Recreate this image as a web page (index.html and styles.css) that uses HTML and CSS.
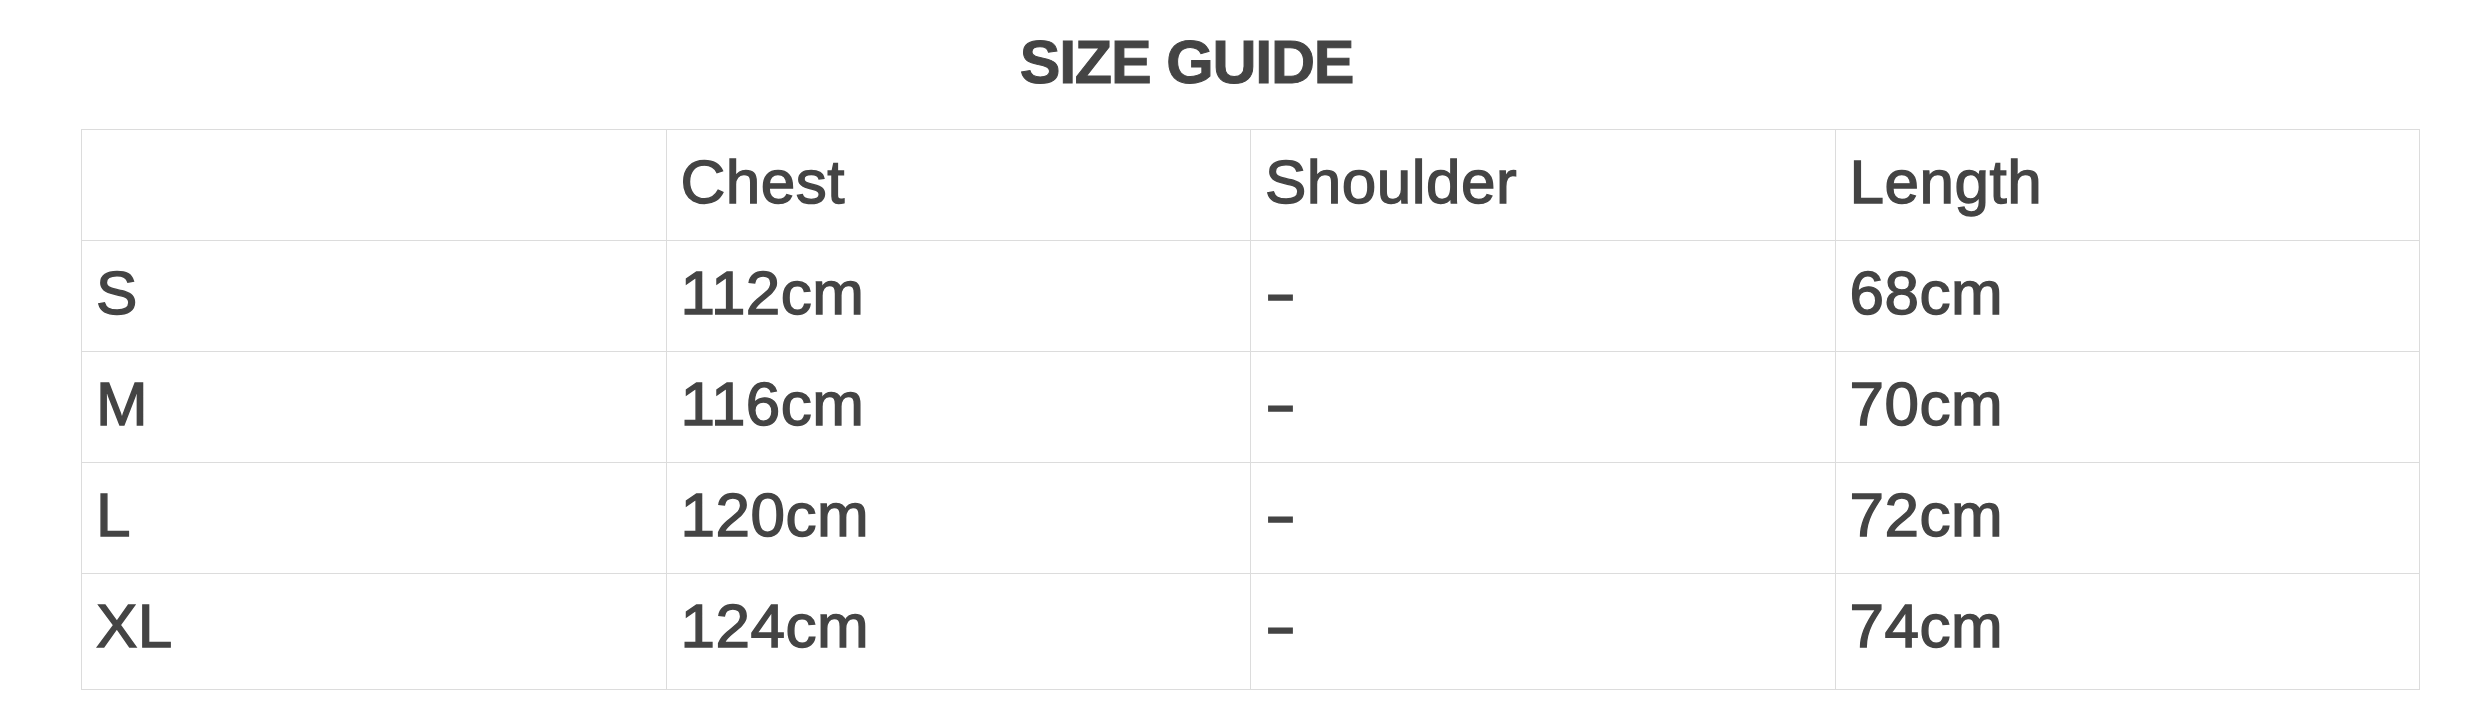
FILE: index.html
```html
<!DOCTYPE html>
<html lang="en">
<head>
<meta charset="utf-8">
<title>Size Guide</title>
<link rel="stylesheet" href="styles.css">
</head>
<body>
<main class="guide">
  <h2 class="guide-title">SIZE GUIDE</h2>
  <table class="size-table">
    <thead>
      <tr><th></th><th>Chest</th><th>Shoulder</th><th>Length</th></tr>
    </thead>
    <tbody>
      <tr><td>S</td><td>112cm</td><td><span class="dash">-</span></td><td>68cm</td></tr>
      <tr><td>M</td><td>116cm</td><td><span class="dash">-</span></td><td>70cm</td></tr>
      <tr><td>L</td><td>120cm</td><td><span class="dash">-</span></td><td>72cm</td></tr>
      <tr class="last"><td>XL</td><td>124cm</td><td><span class="dash">-</span></td><td>74cm</td></tr>
    </tbody>
  </table>
</main>
</body>
</html>
```

FILE: styles.css
```css
html, body {
  margin: 0;
  padding: 0;
  background: #ffffff;
}

body {
  font-family: "Liberation Sans", Arial, sans-serif;
  color: #444444;
}

.guide {
  padding: 27px 72px 0 81px;
}

.guide-title {
  margin: 0 0 32px 0;
  padding-right: 128px;
  text-align: center;
  font-size: 61px;
  line-height: 70px;
  font-weight: 700;
  letter-spacing: -1.2px;
  color: #444444;
  -webkit-text-stroke: 1px #444444;
}

.size-table {
  width: 100%;
  table-layout: fixed;
  border-collapse: collapse;
  border: 1px solid #dcdcdc;
}

.size-table th,
.size-table td {
  border: 1px solid #dcdcdc;
  padding: 16px 14px 22px 14px;
  font-size: 62px;
  line-height: 72px;
  font-weight: 400;
  letter-spacing: 0.5px;
  text-align: left;
  vertical-align: top;
  color: #444444;
  -webkit-text-stroke: 1.4px #444444;
}

.size-table .last td {
  padding-bottom: 27px;
}

.dash {
  display: inline-block;
  transform: scaleX(1.5);
  transform-origin: left center;
}
```
